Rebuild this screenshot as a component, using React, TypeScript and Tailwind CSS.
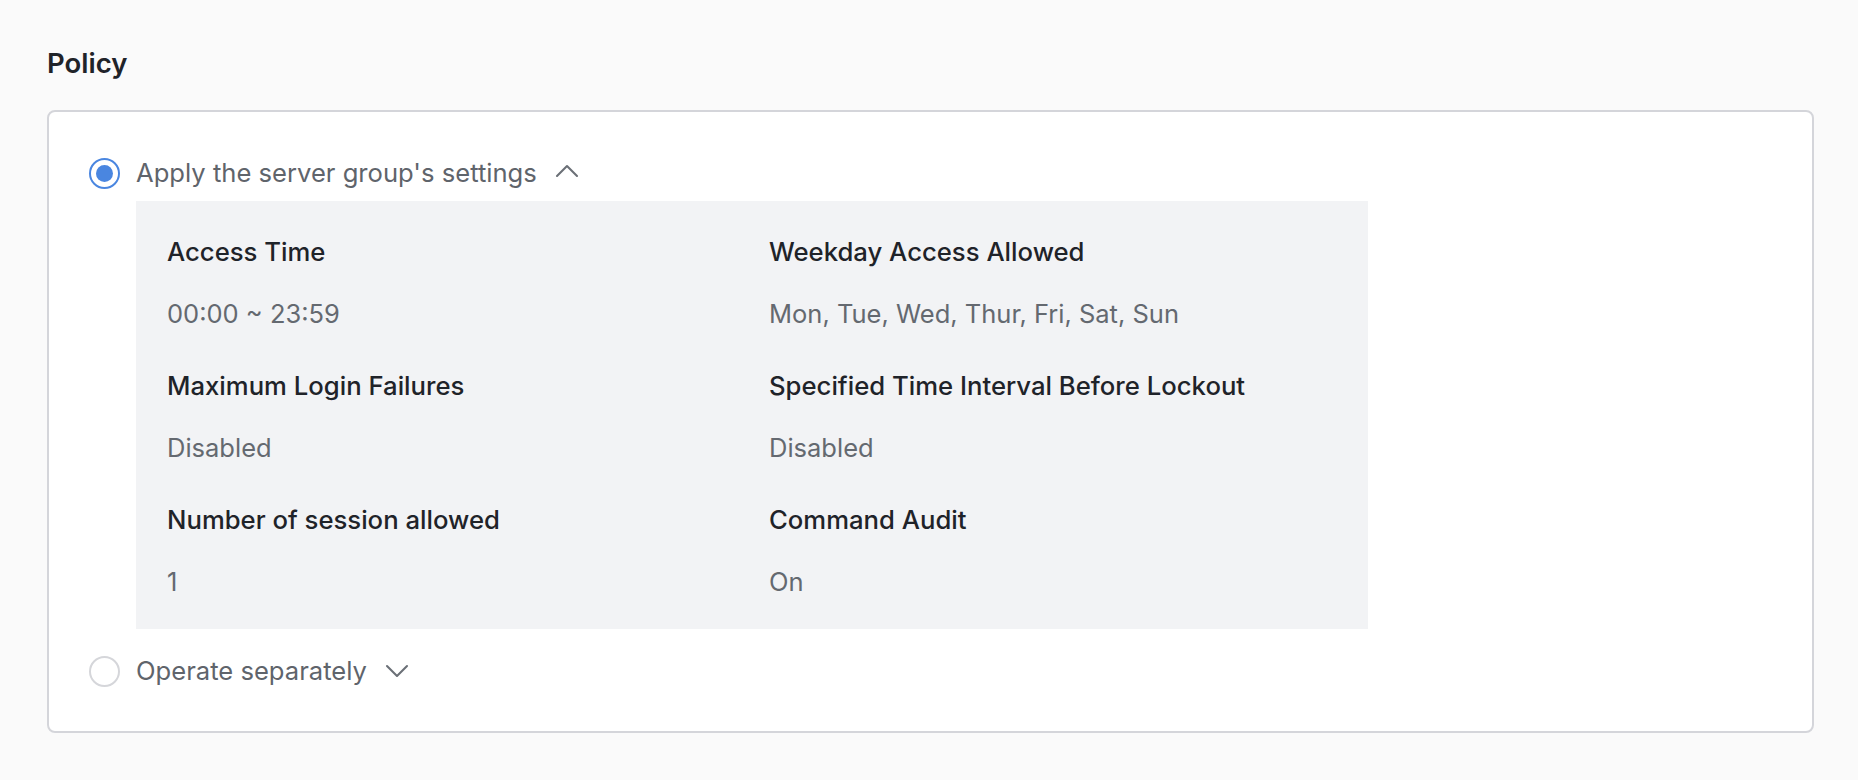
import { ChevronUp, ChevronDown } from 'lucide-react';

const rows = [
  [
    { label: 'Access Time', value: '00:00 ~ 23:59' },
    { label: 'Weekday Access Allowed', value: 'Mon, Tue, Wed, Thur, Fri, Sat, Sun' },
  ],
  [
    { label: 'Maximum Login Failures', value: 'Disabled' },
    { label: 'Specified Time Interval Before Lockout', value: 'Disabled' },
  ],
  [
    { label: 'Number of session allowed', value: '1' },
    { label: 'Command Audit', value: 'On' },
  ],
];

function Field({ label, value }: { label: string; value: string }) {
  return (
    <div className="flex flex-col gap-[35px]">
      <div className="text-[25.7px] leading-[27px] font-medium text-[#1f2329]">{label}</div>
      <div className="text-[25.5px] leading-[27px] text-[#646970]">{value}</div>
    </div>
  );
}

export default function App() {
  return (
    <div
      className="min-h-[780px] w-full bg-[#fafafa] pl-[47px] pr-[44px] pt-[46px]"
      style={{ fontFamily: 'Inter, "Noto Sans", sans-serif' }}
    >
      <h2 className="text-[27.5px] leading-[34px] font-semibold text-[#1f2329]">Policy</h2>

      <div className="mt-[30px] rounded-[8px] border-2 border-[#d4d5da] bg-white pl-[40px] pr-[25px] pt-[41px] pb-[40px]">
        <div className="flex h-[40px] items-center gap-[16px]">
          <span className="flex h-[31px] w-[31px] items-center justify-center rounded-full border-2 border-[#4a86e0]">
            <span className="h-[17px] w-[17px] rounded-full bg-[#4a86e0]" />
          </span>
          <span className="text-[25.6px] text-[#5f646b]">Apply the server group's settings</span>
          <ChevronUp className="-ml-[6px] -mt-[4px] h-[40px] w-[40px] text-[#6b7077]" strokeWidth={1.25} />
        </div>

        <div className="ml-[47px] mt-[8px] w-[1232px] bg-[#f2f3f5] px-[31px] pt-[37px] pb-[34px]">
          <div className="flex flex-col gap-[45px]">
            {rows.map((r, i) => (
              <div key={i} className="grid grid-cols-[602px_1fr]">
                <Field label={r[0].label} value={r[0].value} />
                <Field label={r[1].label} value={r[1].value} />
              </div>
            ))}
          </div>
        </div>

        <div className="mt-[22px] flex h-[40px] items-center gap-[16px]">
          <span className="h-[31px] w-[31px] rounded-full border-2 border-[#d5d6da]" />
          <span className="text-[25.6px] text-[#5f646b]">Operate separately</span>
          <ChevronDown className="-ml-[6px] h-[40px] w-[40px] text-[#6b7077]" strokeWidth={1.25} />
        </div>
      </div>
    </div>
  );
}
